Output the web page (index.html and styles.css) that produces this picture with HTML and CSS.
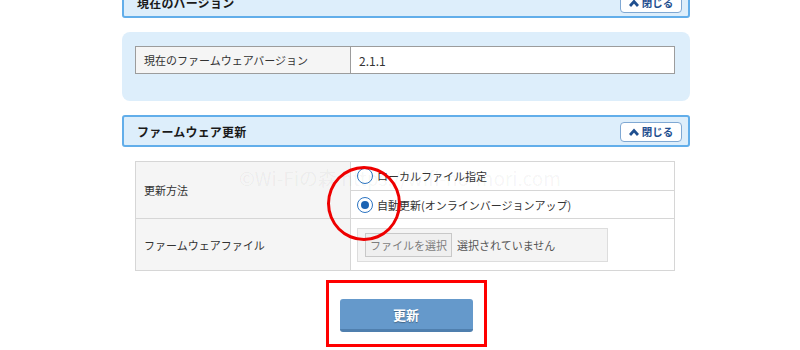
FILE: index.html
```html
<!DOCTYPE html>
<html lang="ja">
<head>
<meta charset="utf-8">
<title>ファームウェア更新</title>
<link rel="stylesheet" href="styles.css">
</head>
<body>
<div class="page">
  <section class="panel-head first">
    <h2>現在のバージョン</h2>
    <button class="close" type="button"><svg class="chev" viewBox="0 0 10 8" width="10" height="8"><path d="M1 7 L5 2.5 L9 7" fill="none" stroke="#1f4f8f" stroke-width="2.8" stroke-linejoin="miter"/></svg>閉じる</button>
  </section>
  <div class="panel-body">
    <table class="info">
      <tr><th>現在のファームウェアバージョン</th><td>2.1.1</td></tr>
    </table>
  </div>

  <section class="panel-head">
    <h2>ファームウェア更新</h2>
    <button class="close" type="button"><svg class="chev" viewBox="0 0 10 8" width="10" height="8"><path d="M1 7 L5 2.5 L9 7" fill="none" stroke="#1f4f8f" stroke-width="2.8" stroke-linejoin="miter"/></svg>閉じる</button>
  </section>
  <div class="form-area">
    <table class="form">
      <tr class="r1">
        <th rowspan="2">更新方法</th>
        <td><label class="radio"><span class="dot"></span>ローカルファイル指定</label></td>
      </tr>
      <tr class="r2">
        <td><label class="radio"><span class="dot on"></span>自動更新(オンラインバージョンアップ)</label></td>
      </tr>
      <tr class="r3">
        <th>ファームウェアファイル</th>
        <td>
          <div class="file">
            <span class="file-btn">ファイルを選択</span>
            <span class="file-name">選択されていません</span>
          </div>
        </td>
      </tr>
    </table>
    <div class="watermark">©Wi-Fiの森 https://wifi-no-mori.com</div>
    <div class="ring"></div>
  </div>
  <div class="actions">
    <div class="highlight">
      <button class="submit" type="button">更新</button>
    </div>
  </div>
</div>
</body>
</html>
```

FILE: styles.css
```css
html, body {
  margin: 0;
  padding: 0;
  background: #ffffff;
}
body {
  font-family: "Noto Sans CJK JP", "Noto Sans", "Liberation Sans", sans-serif;
  font-size: 12px;
  color: #333333;
  overflow: hidden;
}
.page {
  width: 568px;
  margin-left: 122px;
}
.panel-head {
  box-sizing: border-box;
  height: 32px;
  border: 2px solid #62aeea;
  border-radius: 3px;
  background: #ddeefb;
  display: flex;
  align-items: center;
  justify-content: space-between;
  padding: 0 6px 0 13px;
  margin-bottom: 14px;
}
.panel-head.first {
  margin-top: -14px;
}
.panel-head h2 {
  margin: 0;
  font-size: 12px;
  font-weight: bold;
  color: #1a1a1a;
  letter-spacing: 0.2px;
}
.close {
  box-sizing: border-box;
  width: 62px;
  height: 20px;
  margin-top: 2px;
  border: 1px solid #7fa8d3;
  border-radius: 4px;
  background: #ffffff;
  color: #1f4f8f;
  font-family: inherit;
  font-size: 10.5px;
  font-weight: bold;
  display: flex;
  align-items: center;
  justify-content: center;
  gap: 3px;
  padding: 0;
  line-height: 1;
}
.panel-body {
  background: #ddeefb;
  border-radius: 8px;
  padding: 14px 13px 27px;
  margin-bottom: 14px;
}
table {
  border-collapse: collapse;
  width: 540px;
  font-size: 11px;
}
.info th, .info td {
  border: 1px solid #9c9c9c;
  height: 26px;
  padding: 0 8px;
  text-align: left;
  font-weight: normal;
}
.info th {
  width: 198px;
  background: #f5f5f5;
}
.info td {
  background: #ffffff;
  font-size: 12px;
}
.form-area {
  position: relative;
  padding: 0 13px;
}
.form th, .form td {
  border: 1px solid #d6d6d6;
  text-align: left;
  font-weight: normal;
  padding: 0 8px;
}
.form th {
  width: 198px;
  background: #f5f5f5;
}
.form td {
  background: #ffffff;
  padding-left: 6px;
}
.form .r1 td { height: 28px; }
.form .r2 td { height: 27px; }
.form .r3 td, .form .r3 th { height: 51px; }
.radio {
  display: flex;
  align-items: center;
  gap: 4px;
  color: #333333;
}
.dot {
  box-sizing: border-box;
  width: 16px;
  height: 16px;
  border: 1.5px solid #2c74c2;
  border-radius: 50%;
  background: #ffffff;
  display: inline-flex;
  align-items: center;
  justify-content: center;
}
.dot.on::after {
  content: "";
  width: 8px;
  height: 8px;
  border-radius: 50%;
  background: #1d64b3;
}
.file {
  box-sizing: border-box;
  width: 251px;
  height: 34px;
  background: #f4f4f4;
  border: 1px solid #dddddd;
  display: flex;
  align-items: center;
  padding-left: 7px;
  gap: 5px;
}
.file-btn {
  box-sizing: border-box;
  height: 24px;
  width: 87px;
  border: 1px solid #c8c8c8;
  background: #efefef;
  color: #7d7d7d;
  display: flex;
  align-items: center;
  justify-content: center;
}
.file-name {
  color: #555555;
}
.watermark {
  position: absolute;
  left: 117px;
  top: 3px;
  font-size: 19px;
  color: rgba(0, 0, 0, 0.05);
  white-space: nowrap;
  pointer-events: none;
}
.ring {
  position: absolute;
  left: 205px;
  top: 5px;
  width: 68px;
  height: 69px;
  border: 3.5px solid #ee0000;
  border-radius: 50%;
  pointer-events: none;
}
.actions {
  display: flex;
  justify-content: center;
  padding-top: 9px;
}
.highlight {
  border: 3px solid #ff0000;
  padding: 16px 11px 12px;
}
.submit {
  display: block;
  box-sizing: border-box;
  width: 133px;
  height: 33px;
  border: none;
  border-bottom: 3px solid #4f7fae;
  border-radius: 3px;
  background: #6599cb;
  color: #ffffff;
  font-family: inherit;
  font-size: 13px;
  font-weight: bold;
  text-shadow: 0 1px 1px rgba(0, 0, 0, 0.35);
  padding: 0;
}
```
